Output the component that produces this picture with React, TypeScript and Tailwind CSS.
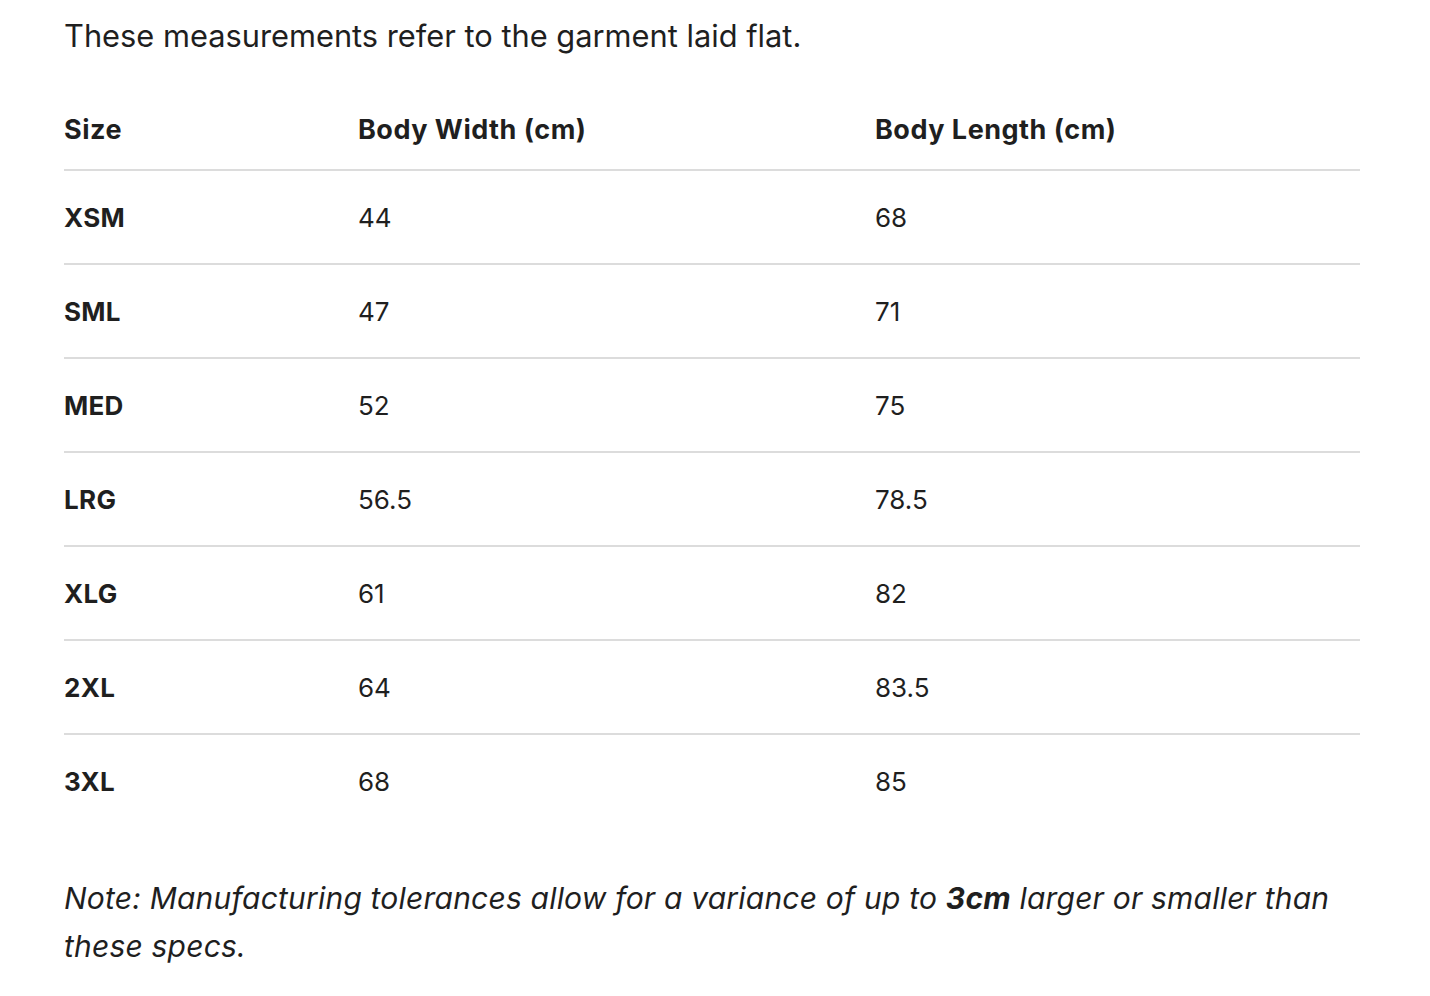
import React from "react";

const rows = [
  ["XSM", "44", "68"],
  ["SML", "47", "71"],
  ["MED", "52", "75"],
  ["LRG", "56.5", "78.5"],
  ["XLG", "61", "82"],
  ["2XL", "64", "83.5"],
  ["3XL", "68", "85"],
];

export default function App() {
  return (
    <div
      className="w-[1430px] h-[996px] bg-white text-[#1f1f1f] pl-[64px] pr-[70px] pt-[14px]"
      style={{ fontFamily: "Inter, 'Noto Sans', sans-serif" }}
    >
      <p className="text-[30.8px] leading-[44px]">These measurements refer to the garment laid flat.</p>
      <table className="w-[1296px] mt-[30px] border-collapse text-[26px]">
        <thead>
          <tr className="h-[82px] border-b-2 border-[#dcdcdc] text-[27px] tracking-[0.5px]">
            <th className="w-[294px] pt-[4px] text-left font-bold">Size</th>
            <th className="w-[517px] pt-[4px] text-left font-bold">Body Width (cm)</th>
            <th className="pt-[4px] text-left font-bold">Body Length (cm)</th>
          </tr>
        </thead>
        <tbody>
          {rows.map((r, i) => (
            <tr
              key={r[0]}
              className={`h-[94px] ${i < rows.length - 1 ? "border-b-2 border-[#dcdcdc]" : ""}`}
            >
              <td className="font-bold tracking-[0.3px]">{r[0]}</td>
              <td>{r[1]}</td>
              <td>{r[2]}</td>
            </tr>
          ))}
        </tbody>
      </table>
      <p className="mt-[46px] text-[30px] leading-[48px] italic tracking-[0.2px]">
        Note: Manufacturing tolerances allow for a variance of up to <b>3cm</b> larger or smaller than
        these specs.
      </p>
    </div>
  );
}
